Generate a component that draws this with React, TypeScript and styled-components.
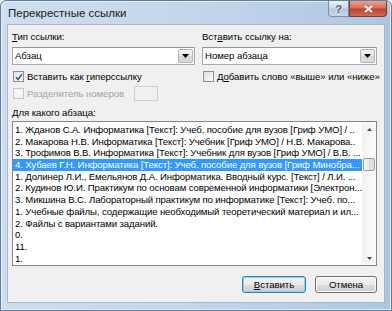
import styled, { createGlobalStyle } from "styled-components";

const GlobalStyle = createGlobalStyle`
  html, body {
    margin: 0;
    padding: 0;
    overflow: hidden;
    background: #ffffff;
  }
  body {
    font-family: "Liberation Sans", Arial, sans-serif;
  }
`;

const Window = styled.div`
  width: 392px;
  height: 311px;
  box-sizing: border-box;
  display: flex;
  flex-direction: column;
  border: 1px solid #5b7ea4;
  border-radius: 6px 6px 0 0;
  padding: 0 6px 7px 6px;
  background: linear-gradient(to right, #cfdeee 0%, #c1d5ea 55%, #adc6e0 100%);
  box-shadow: inset 0 0 0 1px #e4eef8;
`;

const TitleBar = styled.div`
  height: 23px;
  display: flex;
  align-items: flex-start;
`;

const Title = styled.span`
  padding: 6px 0 0 1px;
  font-size: 11.5px;
  color: #1b1b1b;
`;

const CaptionButtons = styled.div`
  margin-left: auto;
  display: flex;
  margin-right: -2px;
`;

const CaptionButton = styled.div<{ $close?: boolean }>`
  width: ${(p) => (p.$close ? "38px" : "21px")};
  height: 16px;
  box-sizing: border-box;
  display: flex;
  align-items: center;
  justify-content: center;
  border: 1px solid ${(p) => (p.$close ? "#7d3a33" : "#7890ab")};
  border-top: none;
  border-radius: ${(p) => (p.$close ? "0 0 4px 0" : "0 0 0 4px")};
  background: ${(p) =>
    p.$close
      ? "linear-gradient(#e8a394 0%, #d8705c 45%, #c3412a 55%, #d06a4c 100%)"
      : "linear-gradient(#e9f0f8 0%, #cbd9e8 45%, #b4c7dc 55%, #c9d8e8 100%)"};
  color: #ffffff;
  font-size: 11px;
  font-weight: bold;
`;

const HelpMark = styled.span`
  color: #4b607a;
  font-size: 11px;
  font-weight: bold;
  text-shadow: 0 0 2px #ffffff;
`;

const Body = styled.div`
  flex: 1;
  background: #f0f0f0;
  border: 1px solid #a3b9d0;
  padding: 6px 7px 0 4px;
  display: flex;
  flex-direction: column;
  font-size: 9.6px;
  letter-spacing: -0.05px;
  color: #000000;
`;

const Columns = styled.div`
  display: grid;
  grid-template-columns: 183px 175px;
  column-gap: 7px;
`;

const Column = styled.div`
  display: flex;
  flex-direction: column;
`;

const Label = styled.div<{ $gap?: number }>`
  height: 12px;
  line-height: 12px;
  margin-top: ${(p) => p.$gap ?? 0}px;
  white-space: nowrap;
`;

const Key = styled.span`
  text-decoration: underline;
  text-underline-offset: 1px;
`;

const Select = styled.div`
  margin-top: 4px;
  height: 18px;
  box-sizing: border-box;
  display: flex;
  align-items: stretch;
  background: #ffffff;
  border: 1px solid #a4abb4;
  border-top-color: #8e96a0;
`;

const SelectText = styled.div`
  flex: 1;
  padding-left: 2px;
  line-height: 16px;
  white-space: nowrap;
`;

const DropButton = styled.div`
  width: 15px;
  margin: 1px;
  box-sizing: border-box;
  display: flex;
  align-items: center;
  justify-content: center;
  border: 1px solid #b4b4b4;
  border-radius: 2px;
  background: linear-gradient(#f4f4f4 0%, #e6e6e6 50%, #d6d6d6 51%, #dcdcdc 100%);
`;

const CheckRow = styled.div<{ $gap: number; $disabled?: boolean }>`
  margin-top: ${(p) => p.$gap}px;
  display: flex;
  align-items: center;
  gap: 3px;
  color: ${(p) => (p.$disabled ? "#a3a3a3" : "#000000")};
  white-space: nowrap;
`;

const Box = styled.div<{ $disabled?: boolean }>`
  flex-shrink: 0;
  width: 11px;
  height: 11px;
  box-sizing: border-box;
  margin-left: 1px;
  display: flex;
  align-items: center;
  justify-content: center;
  border: 1px solid ${(p) => (p.$disabled ? "#c6c6c6" : "#8e8f8f")};
  background: ${(p) =>
    p.$disabled
      ? "#f4f4f4"
      : "linear-gradient(135deg, #dcdcdc 0%, #f6f6f6 70%, #ffffff 100%)"};
`;

const NumberField = styled.div`
  flex-shrink: 0;
  width: 24px;
  height: 15px;
  box-sizing: border-box;
  margin-left: 7px;
  border: 1px solid #cdcdcd;
  background: #f0f0f0;
`;

const ListBox = styled.div`
  margin-top: 2px;
  height: 145px;
  box-sizing: border-box;
  display: flex;
  background: #ffffff;
  border: 1px solid #828790;
`;

const Rows = styled.div`
  flex: 1;
  min-width: 0;
  padding-top: 2px;
  letter-spacing: -0.12px;
`;

const Row = styled.div<{ $selected?: boolean }>`
  height: 11.7px;
  line-height: 11.7px;
  padding-left: 2px;
  white-space: nowrap;
  overflow: hidden;
  background: ${(p) => (p.$selected ? "#3399ff" : "transparent")};
  color: ${(p) => (p.$selected ? "#ffffff" : "#000000")};
`;

const ScrollBar = styled.div`
  flex-shrink: 0;
  width: 14px;
  display: flex;
  flex-direction: column;
  align-items: center;
  background: linear-gradient(to right, #f1f1f1, #fbfbfb);
`;

const ScrollArrow = styled.div`
  height: 14px;
  width: 14px;
  display: flex;
  align-items: center;
  justify-content: center;
`;

const Thumb = styled.div`
  margin-top: 22px;
  width: 12px;
  height: 13px;
  box-sizing: border-box;
  border: 1px solid #9a9a9a;
  border-radius: 2px;
  background: linear-gradient(to right, #f4f4f4 0%, #e8e8e8 50%, #d9d9d9 51%, #e4e4e4 100%);
`;

const Spacer = styled.div`
  flex: 1;
`;

const Footer = styled.div`
  margin-top: 10px;
  display: flex;
  justify-content: flex-end;
  gap: 9px;
`;

const Button = styled.div<{ $default?: boolean }>`
  width: ${(p) => (p.$default ? "64px" : "62px")};
  height: 17px;
  box-sizing: border-box;
  display: flex;
  align-items: center;
  justify-content: center;
  border: 1px solid ${(p) => (p.$default ? "#3c7fb1" : "#707070")};
  border-radius: 3px;
  background: linear-gradient(#f2f2f2 0%, #ebebeb 50%, #dddddd 51%, #cfcfcf 100%);
  box-shadow: ${(p) => (p.$default ? "inset 0 0 0 1px #8ed0f2" : "inset 0 0 0 1px #fbfbfb")};
  white-space: nowrap;
`;

const DownTriangle = () => (
  <svg width="7" height="4" viewBox="0 0 7 4">
    <path d="M0 0 H7 L3.5 4 Z" fill="#000000" />
  </svg>
);

const SmallArrow = ({ up }: { up?: boolean }) => (
  <svg width="5" height="3" viewBox="0 0 5 3">
    <path d={up ? "M0 3 H5 L2.5 0 Z" : "M0 0 H5 L2.5 3 Z"} fill="#4d4d4d" />
  </svg>
);

const CheckMark = () => (
  <svg width="8" height="8" viewBox="0 0 8 8">
    <path d="M1 4.2 L3.1 6.4 L7 1.2" fill="none" stroke="#3f5b8f" strokeWidth="1.6" />
  </svg>
);

const CloseGlyph = () => (
  <svg width="9" height="8" viewBox="0 0 9 8">
    <path d="M1 1 L8 7 M8 1 L1 7" stroke="#ffffff" strokeWidth="1.8" />
  </svg>
);

const entries = [
  "1. Жданов С.А. Информатика [Текст]: Учеб. пособие для вузов [Гриф УМО] / ..",
  "2. Макарова Н.В.  Информатика [Текст]: Учебник [Гриф УМО] / Н.В. Макарова..",
  "3. Трофимов В.В. Информатика [Текст]: Учебник для вузов [Гриф УМО] / В.В. ...",
  "4. Хубаев Г.Н. Информатика [Текст]: Учеб. пособие для вузов [Гриф Минобра...",
  "1. Долинер Л.И., Емельянов Д.А. Информатика. Вводный курс. [Текст] / Л.И. ...",
  "2. Кудинов Ю.И. Практикум по основам современной информатики [Электрон...",
  "3. Микшина В.С. Лабораторный практикум по информатике [Текст]: Учеб. по...",
  "1. Учебные файлы, содержащие необходимый теоретический материал и ил...",
  "2. Файлы с вариантами заданий.",
  "0.",
  "11.",
  "1.",
];

export default function App() {
  return (
    <>
      <GlobalStyle />
      <Window>
        <TitleBar>
          <Title>Перекрестные ссылки</Title>
          <CaptionButtons>
            <CaptionButton>
              <HelpMark>?</HelpMark>
            </CaptionButton>
            <CaptionButton $close>
              <CloseGlyph />
            </CaptionButton>
          </CaptionButtons>
        </TitleBar>
        <Body>
          <Columns>
            <Column>
              <Label>
                <Key>Т</Key>ип ссылки:
              </Label>
              <Select>
                <SelectText>Абзац</SelectText>
                <DropButton>
                  <DownTriangle />
                </DropButton>
              </Select>
              <CheckRow $gap={6}>
                <Box>
                  <CheckMark />
                </Box>
                <span>
                  Вставить как <Key>г</Key>иперссылку
                </span>
              </CheckRow>
              <CheckRow $gap={4} $disabled>
                <Box $disabled />
                <span>Разделитель номеров</span>
                <NumberField />
              </CheckRow>
            </Column>
            <Column>
              <Label>
                Вст<Key>а</Key>вить ссылку на:
              </Label>
              <Select>
                <SelectText>Номер абзаца</SelectText>
                <DropButton>
                  <DownTriangle />
                </DropButton>
              </Select>
              <CheckRow $gap={6}>
                <Box />
                <span>
                  Д<Key>о</Key>бавить слово «выше» или «ниже»
                </span>
              </CheckRow>
            </Column>
          </Columns>
          <Label $gap={6}>Для какого абзаца:</Label>
          <ListBox>
            <Rows>
              {entries.map((text, i) => (
                <Row key={i} $selected={i === 3}>
                  {text}
                </Row>
              ))}
            </Rows>
            <ScrollBar>
              <ScrollArrow>
                <SmallArrow up />
              </ScrollArrow>
              <Thumb />
              <Spacer />
              <ScrollArrow>
                <SmallArrow />
              </ScrollArrow>
            </ScrollBar>
          </ListBox>
          <Footer>
            <Button $default>
              <Key>В</Key>ставить
            </Button>
            <Button>Отмена</Button>
          </Footer>
        </Body>
      </Window>
    </>
  );
}
